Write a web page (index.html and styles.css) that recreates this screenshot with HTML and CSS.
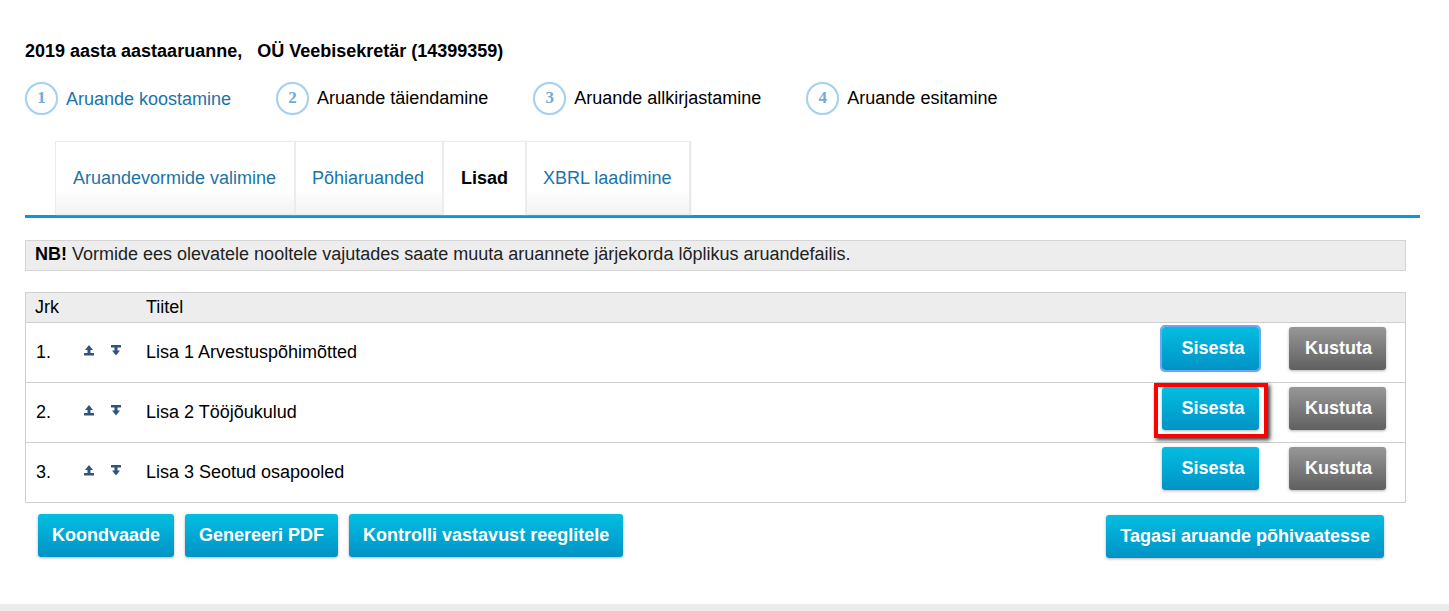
FILE: index.html
```html
<!DOCTYPE html>
<html lang="et">
<head>
<meta charset="utf-8">
<title>Aruande lisad</title>
<link rel="stylesheet" href="styles.css">
</head>
<body>
<main class="page">
  <h1 class="title">2019 aasta aastaaruanne, &nbsp; OÜ Veebisekretär (14399359)</h1>
  <ol class="steps">
    <li class="step step-link"><span class="num">1</span><span class="label label-low">Aruande koostamine</span></li>
    <li class="step"><span class="num">2</span><span class="label">Aruande täiendamine</span></li>
    <li class="step"><span class="num">3</span><span class="label">Aruande allkirjastamine</span></li>
    <li class="step"><span class="num">4</span><span class="label">Aruande esitamine</span></li>
  </ol>
  <nav class="tabs">
    <a class="tab t1">Aruandevormide valimine</a>
    <a class="tab t2">Põhiaruanded</a>
    <a class="tab active t3">Lisad</a>
    <a class="tab t4">XBRL laadimine</a>
  </nav>
  <p class="notice"><b>NB!</b> Vormide ees olevatele nooltele vajutades saate muuta aruannete järjekorda lõplikus aruandefailis.</p>
  <div class="table">
    <div class="row head"><span class="c-nr c-jrk">Jrk</span><span class="c-arrows"></span><span class="c-title">Tiitel</span></div>
    <div class="row">
      <span class="c-nr">1.</span>
      <span class="c-arrows">
        <svg class="arrow" viewBox="0 0 10 11"><path d="M5 0 9 5H1ZM3.500 5h3v3h-3ZM0 8h10v2.500H0Z"/></svg>
        <svg class="arrow" viewBox="0 0 10 11"><path d="M0 0h10v2.500H0ZM3.500 2.500h3v3h-3ZM1 5.500h8L5 10.500Z"/></svg>
      </span>
      <span class="c-title">Lisa 1 Arvestuspõhimõtted</span>
      <span class="c-actions"><a class="btn blue insert focus">Sisesta</a><a class="btn gray">Kustuta</a></span>
    </div>
    <div class="row">
      <span class="c-nr">2.</span>
      <span class="c-arrows">
        <svg class="arrow" viewBox="0 0 10 11"><path d="M5 0 9 5H1ZM3.500 5h3v3h-3ZM0 8h10v2.500H0Z"/></svg>
        <svg class="arrow" viewBox="0 0 10 11"><path d="M0 0h10v2.500H0ZM3.500 2.500h3v3h-3ZM1 5.500h8L5 10.500Z"/></svg>
      </span>
      <span class="c-title">Lisa 2 Tööjõukulud</span>
      <span class="c-actions"><a class="btn blue insert marked">Sisesta</a><a class="btn gray">Kustuta</a></span>
    </div>
    <div class="row">
      <span class="c-nr">3.</span>
      <span class="c-arrows">
        <svg class="arrow" viewBox="0 0 10 11"><path d="M5 0 9 5H1ZM3.500 5h3v3h-3ZM0 8h10v2.500H0Z"/></svg>
        <svg class="arrow" viewBox="0 0 10 11"><path d="M0 0h10v2.500H0ZM3.500 2.500h3v3h-3ZM1 5.500h8L5 10.500Z"/></svg>
      </span>
      <span class="c-title">Lisa 3 Seotud osapooled</span>
      <span class="c-actions"><a class="btn blue insert">Sisesta</a><a class="btn gray">Kustuta</a></span>
    </div>
  </div>
  <div class="actions">
    <a class="btn blue wide">Koondvaade</a>
    <a class="btn blue wide">Genereeri PDF</a>
    <a class="btn blue wide">Kontrolli vastavust reeglitele</a>
    <a class="btn blue wide back">Tagasi aruande põhivaatesse</a>
  </div>
</main>
<footer class="footer"></footer>
</body>
</html>
```
FILE: styles.css
```css
* { box-sizing: border-box; }
html, body { margin: 0; height: 611px; overflow: hidden; }
body {
  background: #fff;
  color: #000;
  font-family: "Liberation Sans", Arial, sans-serif;
  font-size: 18px;
  display: flex;
  flex-direction: column;
}
.page { height: 604px; padding: 41px 29px 0 25px; }
.title { margin: 0; font-size: 18px; line-height: 20px; font-weight: bold; }
.steps { list-style: none; margin: 20px 0 0; padding: 0; display: flex; height: 34px; }
.step { display: flex; align-items: center; margin-right: 45px; }
.num {
  width: 33px; height: 33px; flex: none;
  border: 2px solid #a3d0f0;
  border-radius: 50%;
  box-shadow: 0 0 1px #c5e2f6;
  color: #72a9d6;
  font-weight: bold; font-size: 17px;
  display: flex; align-items: center; justify-content: center;
  font-family: "Liberation Serif", serif;
  margin-right: 8px;
}
.label { font-size: 18px; line-height: 20px; }
.label-low { position: relative; top: 1px; }
.step-link .label { color: #1a74a8; }
.tabs {
  display: flex;
  margin-top: 26px;
  padding-left: 30px;
  height: 77px;
  border-bottom: 3px solid #0a98db;
}
.tab {
  height: 74px;
  padding: 0 17px;
  display: flex; align-items: center;
  font-size: 18px;
  color: #1a74a8;
  border: 1px solid #ececec;
  background: linear-gradient(to bottom, #fff 0, #fff 66%, #f3f3f3 100%);
  box-shadow: 1px 0 1px #e6e6e6;
}
.t1 { width: 240px; }
.t2 { width: 148px; padding-left: 16px; }
.t3 { width: 83px; justify-content: center; padding: 0; }
.t4 { width: 164px; padding-left: 16px; }
.tab.active { background: #fff; color: #000; font-weight: bold; border-bottom: 0; }
.notice {
  margin: 22px 14px 0 0;
  height: 31px;
  background: #ededed;
  border: 1px solid #d4d4d4;
  padding: 0 9px;
  line-height: 27px;
  font-size: 18px;
  color: #222;
}
.notice b { color: #000; }
.table {
  margin: 21px 14px 0 0;
  border: 1px solid #cfcfcf;
  border-bottom: 0;
}
.row {
  height: 60px;
  display: flex;
  align-items: center;
  border-bottom: 1px solid #cfcfcf;
  padding-left: 10px;
  font-size: 18px;
  position: relative;
}
.row.head { height: 30px; background: #ededed; }
.c-nr { width: 45px; flex: none; }
.c-jrk { margin-left: -1px; margin-right: 1px; }
.c-arrows { width: 65px; flex: none; display: flex; gap: 17px; padding-left: 3px; padding-bottom: 4px; }
.arrow { width: 10px; height: 11px; fill: #2d5480; }
.c-title { flex: 1; }
.c-actions { display: flex; gap: 30px; padding-right: 19px; padding-bottom: 9px; }
.btn {
  display: flex; align-items: center; justify-content: center;
  height: 43px;
  border-radius: 3px;
  color: #fff;
  font-weight: bold;
  font-size: 18px;
  box-shadow: 0 1px 3px rgba(0, 0, 0, .3);
  width: 97px;
  position: relative;
}
.blue { background: linear-gradient(to bottom, #03bee0 0, #0093c6 100%); }
.gray { background: linear-gradient(to bottom, #979797 0, #606060 100%); padding-left: 2px; }
.insert { padding-left: 5px; }
.focus { outline: 2px solid #6da6f5; }
.marked::after {
  content: "";
  position: absolute;
  left: -8px; top: -4px; right: -9px; bottom: -8px;
  border: 4px solid #f00;
  box-shadow: 2px 2px 4px rgba(0, 0, 0, .8);
}
.actions { display: flex; gap: 11px; margin: 11px 36px 0 13px; }
.actions .btn { width: auto; }
.wide { padding: 0 14px; }
.back { margin-left: auto; top: 1px; }
.footer { height: 7px; background: #ececec; }
```
